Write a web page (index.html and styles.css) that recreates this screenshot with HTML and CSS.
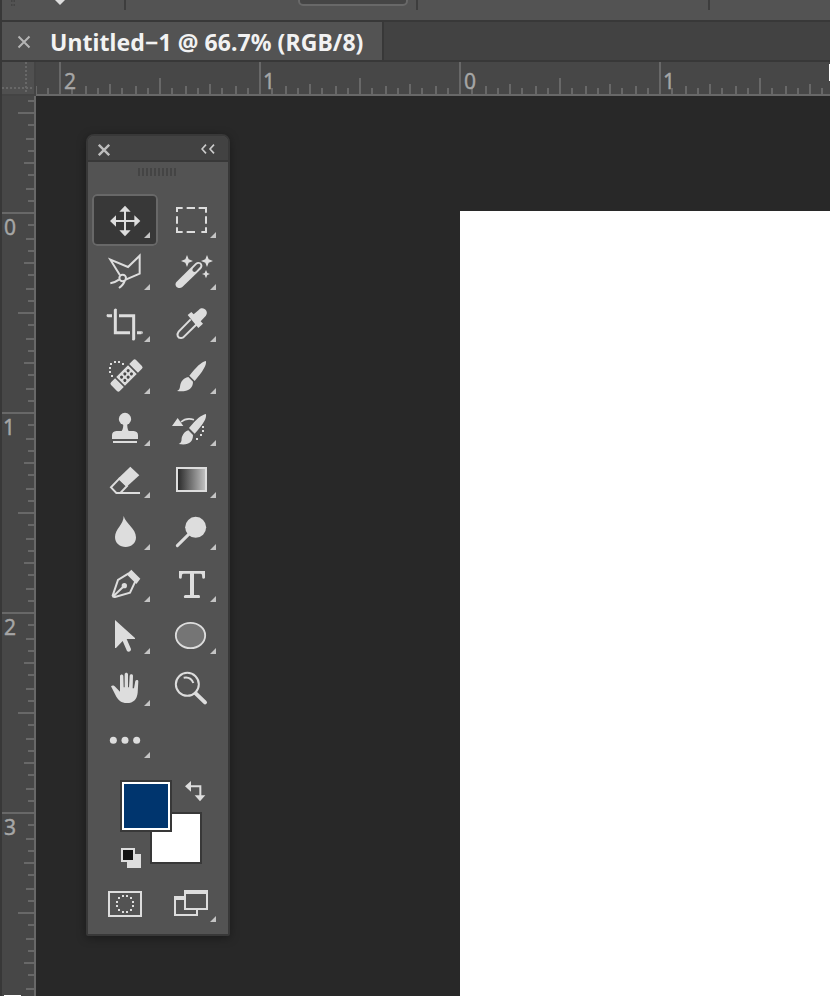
FILE: index.html
```html
<!DOCTYPE html>
<html lang="en">
<head>
<meta charset="utf-8">
<title>Untitled-1</title>
<link rel="stylesheet" href="styles.css">
</head>
<body>
<div class="app">
  <header class="options">
    <svg width="828" height="20" viewBox="2 0 828 20">
      <path d="M11 0h1.500v2h-1.500zM13.500 0h1.500v2h-1.500zM11 4h1.500v2h-1.500zM13.500 4h1.500v2h-1.500z" fill="#444"/>
      <path d="M55 0h10l-5 5z" fill="#ddd"/>
      <path d="M124 0h2v10h-2zM416 0h2v10h-2zM708 0h2v10h-2z" fill="#3d3d3d"/>
      <rect x="299" y="-12" width="108" height="17" rx="4" fill="#454545" stroke="#686868" stroke-width="2"/>
    </svg>
  </header>
  <nav class="tabs">
    <div class="tab">
      <svg width="14" height="14" viewBox="0 0 14 14"><path d="M1.500 1.500l11 11M12.500 1.500l-11 11" stroke="#b4b4b4" stroke-width="2"/></svg>
      <span class="tab-title">Untitled−1 @ 66.7% (RGB/8)</span>
    </div>
  </nav>
  <div class="top-ruler">
    <svg class="corner" width="34" height="34" viewBox="2 62 34 34">
      <rect x="2" y="62" width="34" height="34" fill="#444"/>
      <rect x="2" y="62" width="32" height="32" fill="#505050"/>
      <path d="M26 62v32M2 88h32" stroke="#686868" stroke-width="2" stroke-dasharray="2 2"/>
    </svg>
    <svg width="794" height="34" viewBox="36 62 794 34">
      <defs><pattern id="h" x="59" y="62" width="200" height="34" patternUnits="userSpaceOnUse">
        <path fill="#686868" d="M0 0h2v32h-2zM12 26h2v6h-2zM26 24h2v8h-2zM38 26h2v6h-2zM50 22h2v10h-2zM62 26h2v6h-2zM76 24h2v8h-2zM88 26h2v6h-2zM100 16h2v16h-2zM112 26h2v6h-2zM126 24h2v8h-2zM138 26h2v6h-2zM150 22h2v10h-2zM162 26h2v6h-2zM176 24h2v8h-2zM188 26h2v6h-2zM0 32h200v2h-200z"/>
      </pattern></defs>
      <rect x="36" y="62" width="794" height="34" fill="url(#h)"/>
      <g class="num"><text x="64" y="89">2</text><text x="263" y="89">1</text><text x="464" y="89">0</text><text x="663" y="89">1</text></g>
      <path d="M829 64h1v17h-1z" fill="#fff"/>
    </svg>
  </div>
  <div class="work">
    <svg class="side-ruler" width="34" height="900" viewBox="2 96 34 900">
      <defs><pattern id="v" x="2" y="12" width="34" height="200" patternUnits="userSpaceOnUse">
        <path fill="#686868" d="M0 0h32v2h-32zM26 12h6v2h-6zM24 26h8v2h-8zM26 38h6v2h-6zM22 50h10v2h-10zM26 62h6v2h-6zM24 76h8v2h-8zM26 88h6v2h-6zM16 100h16v2h-16zM26 112h6v2h-6zM24 126h8v2h-8zM26 138h6v2h-6zM22 150h10v2h-10zM26 162h6v2h-6zM24 176h8v2h-8zM26 188h6v2h-6zM32 0h2v200h-2z"/>
      </pattern></defs>
      <rect x="2" y="96" width="34" height="900" fill="url(#v)"/>
      <g class="num"><text x="4" y="234.500">0</text><text x="3" y="434.500">1</text><text x="4" y="634.500">2</text><text x="4" y="834.500">3</text></g>
      <path d="M4 995h17v1h-17z" fill="#fff"/>
    </svg>
    <main class="canvas">
      <div class="page"></div>
      <aside class="panel">
        <div class="panel-head">
          <svg width="12" height="12" viewBox="0 0 12 12"><path d="M.8.8l10.400 10.400M11.200.8l-10.400 10.400" stroke="#bdbdbd" stroke-width="2.400"/></svg>
          <svg width="14" height="10" viewBox="0 0 14 10"><path d="M5 .6L1 5l4 4.400M13 .6L9 5l4 4.400" fill="none" stroke="#ccc" stroke-width="1.600"/></svg>
        </div>
        <div class="grip"></div>
        <div class="tools">
          <button class="tool on" aria-label="Move"><svg viewBox="36 207 198 156"><path d="M135 252v72M99 288h72" class="s5"/><path d="M135 242l17 18h-34zM135 334l17-18h-34zM90 288l18-17v34zM181 288l-18-17v34z"/><path class="tri" d="M210 321v18h-18z"/></svg></button>
          <button class="tool" aria-label="Marquee"><svg viewBox="234 207 198 156"><path class="s6" d="M291 261v-12h17M320 249h25M356 249h22v14M378 274v22M378 307v14h-14M345 321h-25M308 321h-17v-14M291 296v-22"/><path class="tri" d="M408 321v18h-18z"/></svg></button>
          <button class="tool" aria-label="Lasso"><svg viewBox="36 363 198 156"><path class="s5" d="M120 451L91 404l53 22 35-34v54l-42 18M91 475c12-2 19-6 26-11M134 467c-2 9-8 15-17 22"/><circle cx="128" cy="459" r="10" class="s5"/><path class="tri" d="M210 477v18h-18z"/></svg></button>
          <button class="tool" aria-label="Magic wand"><svg viewBox="234 363 198 156"><path d="M290 470l56-55c12-11 29 4 17 17l-56 54c-11 10-28-5-17-16z"/><path d="M339 430l12-12c7-5 14 2 8 9l-11 12c-7 5-14-2-9-9z" fill="#535353"/><path d="M321 390l5 13 13 5-13 5-5 13-5-13-13-5 13-5zM381 390l5 13 13 5-13 5-5 13-5-13-13-5 13-5zM378 435l4 9 8 3-8 3-4 10-4-10-8-3 8-3z"/><path class="tri" d="M408 477v18h-18z"/></svg></button>

          <button class="tool" aria-label="Crop"><svg viewBox="36 9 198 156"><path d="M83 62h13M106 44v69h44M117 62h44v71M171 113h13" fill="none" stroke="#ddd" stroke-width="9" stroke-linecap="butt"/><path d="M84 57a4.500 4.500 0 0 0 0 9M102 45a4.500 4.500 0 0 1 9 0M156 132a4.500 4.500 0 0 0 9 0M184 108a4.500 4.500 0 0 1 0 9"/><path class="tri" d="M210 123v18h-18z"/></svg></button>
          <button class="tool" aria-label="Eyedropper"><svg viewBox="234 9 198 156"><path class="s5" d="M332 73l-36 37c-7 9-3 20 8 19q5 0 9-5l37-36"/><path d="M323 60l11-9 7 7 16-14c12-12 32 5 20 19l-15 16 7 7-14 13z"/><path class="tri" d="M408 123v18h-18z"/></svg></button>
          <button class="tool" aria-label="Healing brush"><svg viewBox="36 165 198 156"><path d="M93 240h6v6h-6zM87 228h6v6h-6zM87 216h6v6h-6zM90 204h6v6h-6zM102 198h6v6h-6zM114 198h6v6h-6zM126 204h6v6h-6z"/><g transform="translate(139.500 241.500) rotate(-45)"><path d="M-25-18.500h50v37h-50zM-30-18.500v37h-17q-6 0-6-6v-25q0-6 6-6zM30-18.500v37h17q6 0 6-6v-25q0-6-6-6z"/><g fill="#484848"><circle cx="-14" cy="-7" r="4.600"/><circle cx="0" cy="-7" r="4.600"/><circle cx="14" cy="-7" r="4.600"/><circle cx="-14" cy="7" r="4.600"/><circle cx="0" cy="7" r="4.600"/><circle cx="14" cy="7" r="4.600"/></g></g><path class="tri" d="M210 279v18h-18z"/></svg></button>
          <button class="tool" aria-label="Brush"><svg viewBox="234 165 198 156"><path d="M378 198c2 14-10 31-34 60l-16-16c20-25 35-41 50-44zM325 246l14 14c0 22-18 32-48 28 12-6 7-14 12-25 6-12 15-16 22-17z"/><path class="tri" d="M408 279v18h-18z"/></svg></button>

          <button class="tool" aria-label="Clone stamp"><svg viewBox="36 321 198 156"><circle cx="135" cy="372" r="18.500"/><path d="M129 384h13c-1 10 1 20 4 24h15q13 1 13 13v11h-78v-11q0-12 13-13h16c4-5 6-14 4-24zM99 438h72v6h-72z"/><path class="tri" d="M210 435v18h-18z"/></svg></button>
          <button class="tool" aria-label="History brush"><svg viewBox="234 321 198 156"><path d="M378 357c2 14-7 29-34 59l-17-17c22-26 36-39 51-42zM325 406l14 14c0 22-14 32-43 27 12-7 7-13 10-22 4-11 12-17 19-19zM293 369l17 24h-34z"/><path d="M303 381c12-11 24-12 39-7" fill="none" stroke="#ddd" stroke-width="5"/><path d="M366 393h6v6h-6zM366 405h6v6h-6zM360 417h6v6h-6zM348 429h6v6h-6z"/><path class="tri" d="M408 435v18h-18z"/></svg></button>
          <button class="tool" aria-label="Eraser"><svg viewBox="36 12 198 156"><path class="s5" d="M180 129h-71l-16-17 25-26 23 22-19 20"/><path d="M151 50l27 26-38 34-25-25z"/><path class="tri" d="M210 126v18h-18z"/></svg></button>
          <button class="tool" aria-label="Gradient"><svg viewBox="234 12 198 156"><defs><linearGradient id="g"><stop stop-color="#262626"/><stop offset="1" stop-color="#c4c4c4"/></linearGradient></defs><rect x="291" y="54" width="87" height="69" fill="url(#g)" stroke="#ddd" stroke-width="6"/><path class="tri" d="M408 126v18h-18z"/></svg></button>

          <button class="tool" aria-label="Blur"><svg viewBox="36 168 198 156"><path d="M131 198c6 22 37 38 37 64 0 18-14 29-31 29s-32-11-32-30c0-24 26-37 26-63z"/><path class="tri" d="M210 282v18h-18z"/></svg></button>
          <button class="tool" aria-label="Dodge"><svg viewBox="234 168 198 156"><circle cx="347" cy="232" r="31.500"/><path d="M326 253l-34 34" stroke="#ddd" stroke-width="9" stroke-linecap="round"/><path class="tri" d="M408 282v18h-18z"/></svg></button>
          <button class="tool" aria-label="Pen"><svg viewBox="36 324 198 156"><path class="s5" d="M146 370l-32 20-16 47q1 5 7 4l45-13 17-36M100 439l29-28"/><circle cx="133" cy="407" r="8"/><path d="M154 359l27 27-12 16-29-29z"/><path class="tri" d="M210 438v18h-18z"/></svg></button>
          <button class="tool" aria-label="Type"><svg viewBox="234 324 198 156"><path d="M297 363h78v20q-2 5-8 2l-1-11q-1-3-5-3h-19v64h14q6 1 3 9h-46q-4-7 3-9h14v-64h-19q-4 0-5 3l-1 11q-6 3-8-2z"/><path class="tri" d="M408 438v18h-18z"/></svg></button>

          <button class="tool" aria-label="Path selection"><svg viewBox="36 15 198 156"><path d="M105 45l60 54v3h-25l13 30c1 7-8 11-12 6l-13-30-20 21h-3z"/><path class="tri" d="M210 129v18h-18z"/></svg></button>
          <button class="tool" aria-label="Ellipse"><svg viewBox="234 15 198 156"><ellipse cx="331.500" cy="91.500" rx="44" ry="38" fill="#757575" stroke="#ddd" stroke-width="5.500"/><path class="tri" d="M408 129v18h-18z"/></svg></button>
          <button class="tool" aria-label="Hand"><svg viewBox="36 171 198 156"><path d="M93 244c5-4 10-2 14 3l13 13v-47c1-6 9-6 10 0l1 34h3v-39c1-6 9-6 10 0v39h3l2-35c2-6 9-5 10 0l-1 38h4l4-22c2-5 9-4 9 1l-2 34c-2 20-13 31-32 31-18 0-25-9-32-19z"/><path class="tri" d="M210 285v18h-18z"/></svg></button>
          <button class="tool" aria-label="Zoom"><svg viewBox="234 171 198 156"><circle cx="322" cy="238" r="34.500" class="s5"/><path class="s5" d="M311 218c15-3 24 3 29 16"/><path d="M347 265l28 27" stroke="#ddd" stroke-width="12" stroke-linecap="round"/></svg></button>

          <button class="tool" aria-label="Edit toolbar"><svg viewBox="36 327 198 156"><circle cx="100" cy="406" r="10.500"/><circle cx="135" cy="406" r="10.500"/><circle cx="170" cy="406" r="10.500"/><path class="tri" d="M210 441v18h-18z"/></svg></button>
        </div>
        <div class="swatches">
          <div class="bg"></div>
          <div class="fg"></div>
          <svg class="swap" width="20" height="20" viewBox="315 47 60 60"><path d="M330 63h31v30" fill="none" stroke="#ddd" stroke-width="6"/><path d="M315 63l18-16v32zM344 90h32l-16 18z"/></svg>
          <svg class="reset" width="20" height="20" viewBox="123 249 60 60"><path d="M141 267h42v42h-42z"/><path d="M126 252h36v36h-36z" fill="#111" stroke="#ddd" stroke-width="6"/></svg>
        </div>
        <div class="modes">
          <svg viewBox="36 345 198 156"><rect x="87" y="381" width="96" height="72" class="s6"/><path d="M126 390h6v6h-6zM138 390h6v6h-6zM150 396h6v6h-6zM156 408h6v6h-6zM156 420h6v6h-6zM150 432h6v6h-6zM138 438h6v6h-6zM126 438h6v6h-6zM114 432h6v6h-6zM108 420h6v6h-6zM108 408h6v6h-6zM114 396h6v6h-6z"/></svg>
          <svg viewBox="234 345 198 156"><path d="M282 393h30v42h42v18h-72zM288 405v42h60v-12h-36v-30z" fill-rule="evenodd"/><path d="M312 375h72v60h-72zM318 387v42h60v-42z" fill-rule="evenodd"/><path class="tri" d="M408 453v18h-18z"/></svg>
        </div>
      </aside>
    </main>
  </div>
</div>
</body>
</html>
```
FILE: styles.css
```css
* { box-sizing: border-box; }
body { margin: 0; background: #383838; font-family: "Open Sans", "Noto Sans", sans-serif; }
svg { display: block; fill: #ddd; flex: none; }
.app { width: 830px; height: 996px; padding-left: 2px; display: flex; flex-direction: column; overflow: hidden; }
.options { height: 20px; margin-bottom: 2px; background: #535353; }
.tabs { height: 38px; margin-bottom: 2px; background: #424242; display: flex; }
.tab { width: 382px; padding: 1px 0 0 15px; background: #535353; border-right: 2px solid #383838; display: flex; align-items: center; gap: 19px; }
.tab-title { color: #f2f2f2; font: bold 23px/36px "Noto Sans", sans-serif; letter-spacing: .08px; white-space: nowrap; }
.top-ruler { height: 34px; background: #474747; display: flex; }
.num { font: 21px "Noto Sans", sans-serif; fill: #a6a6a6; stroke: #a6a6a6; stroke-width: .4px; }
.work { flex: 1; display: flex; }
.side-ruler { background: #474747; }
.canvas { flex: 1; position: relative; padding: 115px 0 0 424px; background: #282828; }
.page { height: 785px; background: #fff; }
.panel { position: absolute; left: 50px; top: 38px; width: 144px; height: 802px; border: 2px solid #383838; border-radius: 8px 8px 2px 2px; background: #535353; box-shadow: 0 2px 10px rgba(0, 0, 0, .35); }
.panel-head { height: 26px; padding: 3px 13px 0 10px; background: #424242; border-bottom: 2px solid #383838; border-radius: 6px 6px 0 0; display: flex; justify-content: space-between; align-items: center; }
.panel-head svg + svg { margin-top: -2px; }
.grip { width: 38px; height: 8px; margin: 6px 0 18px 50px; background: repeating-linear-gradient(90deg, #444 0 2px, #535353 2px 4px); }
.tools { display: grid; grid-template-columns: 66px 66px; grid-auto-rows: 52px; padding-left: 4px; }
.tool { padding: 0; border: 0; background: none; display: block; }
.tool svg, .modes svg { width: 66px; height: 52px; }
.tool.on { background: #383838; border-radius: 5px; box-shadow: inset 0 0 0 2px #686868; }
.s5, .s6 { fill: none; stroke: #ddd; stroke-width: 6; }
.tri { fill: #c4c4c4; }
.swatches { position: relative; height: 114px; }
.fg, .bg { position: absolute; width: 52px; height: 52px; border: 2px solid #383838; background: #fff; }
.fg { left: 32px; top: 14px; background: #00356e; box-shadow: inset 0 0 0 2px #fff; }
.bg { left: 62px; top: 46px; }
.swap { position: absolute; left: 97px; top: 15px; overflow: visible; }
.reset { position: absolute; left: 33px; top: 82px; }
.modes { display: flex; padding-left: 4px; }
```
